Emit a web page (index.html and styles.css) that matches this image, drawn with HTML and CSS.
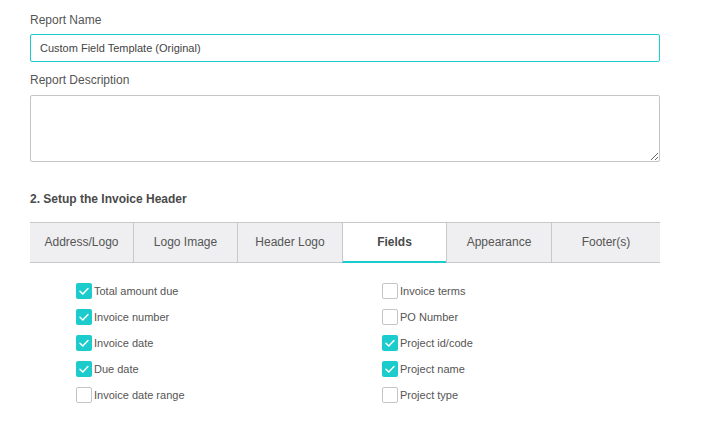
FILE: index.html
```html
<!DOCTYPE html>
<html lang="en">
<head>
<meta charset="utf-8">
<title>Report Setup</title>
<link rel="stylesheet" href="styles.css">
</head>
<body>
<div class="page">
  <label class="label label-first" for="rname">Report Name</label>
  <input id="rname" class="text-input" type="text" value="Custom Field Template (Original)">
  <label class="label label-second" for="rdesc">Report Description</label>
  <textarea id="rdesc" class="text-area"></textarea>

  <h2 class="section-title">2. Setup the Invoice Header</h2>

  <div class="tabs">
    <div class="tab">Address/Logo</div>
    <div class="tab">Logo Image</div>
    <div class="tab">Header Logo</div>
    <div class="tab tab-active">Fields</div>
    <div class="tab">Appearance</div>
    <div class="tab">Footer(s)</div>
  </div>

  <div class="fields">
    <div class="field"><span class="box checked"><svg viewBox="0 0 16 16" width="16" height="16"><path d="M4 8.3 L6.8 11 L12 5.6" fill="none" stroke="#fff" stroke-width="1.5" stroke-linecap="round" stroke-linejoin="round"/></svg></span><span class="field-label">Total amount due</span></div>
    <div class="field"><span class="box"></span><span class="field-label">Invoice terms</span></div>
    <div class="field"><span class="box checked"><svg viewBox="0 0 16 16" width="16" height="16"><path d="M4 8.3 L6.8 11 L12 5.6" fill="none" stroke="#fff" stroke-width="1.5" stroke-linecap="round" stroke-linejoin="round"/></svg></span><span class="field-label">Invoice number</span></div>
    <div class="field"><span class="box"></span><span class="field-label">PO Number</span></div>
    <div class="field"><span class="box checked"><svg viewBox="0 0 16 16" width="16" height="16"><path d="M4 8.3 L6.8 11 L12 5.6" fill="none" stroke="#fff" stroke-width="1.5" stroke-linecap="round" stroke-linejoin="round"/></svg></span><span class="field-label">Invoice date</span></div>
    <div class="field"><span class="box checked"><svg viewBox="0 0 16 16" width="16" height="16"><path d="M4 8.3 L6.8 11 L12 5.6" fill="none" stroke="#fff" stroke-width="1.5" stroke-linecap="round" stroke-linejoin="round"/></svg></span><span class="field-label">Project id/code</span></div>
    <div class="field"><span class="box checked"><svg viewBox="0 0 16 16" width="16" height="16"><path d="M4 8.3 L6.8 11 L12 5.6" fill="none" stroke="#fff" stroke-width="1.5" stroke-linecap="round" stroke-linejoin="round"/></svg></span><span class="field-label">Due date</span></div>
    <div class="field"><span class="box checked"><svg viewBox="0 0 16 16" width="16" height="16"><path d="M4 8.3 L6.8 11 L12 5.6" fill="none" stroke="#fff" stroke-width="1.5" stroke-linecap="round" stroke-linejoin="round"/></svg></span><span class="field-label">Project name</span></div>
    <div class="field"><span class="box"></span><span class="field-label">Invoice date range</span></div>
    <div class="field"><span class="box"></span><span class="field-label">Project type</span></div>
  </div>
</div>
</body>
</html>
```

FILE: styles.css
```css
* { box-sizing: border-box; }
html, body {
  margin: 0;
  padding: 0;
  background: #ffffff;
}
body {
  font-family: "Liberation Sans", Arial, sans-serif;
  color: #555555;
}
.page {
  width: 630px;
  margin-left: 30px;
  padding-top: 13px;
  display: flex;
  flex-direction: column;
}
.label {
  display: block;
  font-size: 12px;
  line-height: 14px;
  color: #555555;
}
.label-first { margin-bottom: 7px; }
.label-second { margin-top: 11px; margin-bottom: 8px; }
.text-input {
  width: 630px;
  height: 28px;
  border: 1px solid #1ccccc;
  border-radius: 2px;
  padding: 0 9px;
  font-family: "Liberation Sans", Arial, sans-serif;
  font-size: 11px;
  color: #444444;
  outline: none;
  margin: 0;
}
.text-area {
  width: 630px;
  height: 67px;
  border: 1px solid #c4c4c4;
  border-radius: 2px;
  margin: 0;
  padding: 4px 8px;
  font-family: "Liberation Sans", Arial, sans-serif;
  font-size: 11px;
  display: block;
}
.section-title {
  margin: 30px 0 16px 0;
  font-size: 12px;
  line-height: 14px;
  font-weight: bold;
  color: #4a4a4a;
}
.tabs {
  display: grid;
  grid-template-columns: 103px 104px 105px 104px 105px 1fr;
  border-top: 1px solid #c8c8c8;
}
.tab {
  height: 40px;
  line-height: 39px;
  text-align: center;
  font-size: 12px;
  color: #555555;
  background: #efeff1;
  border-bottom: 1px solid #c8c8c8;
  border-left: 1px solid #c8c8c8;
}
.tab:first-child { border-left: none; }
.tab-active {
  background: #ffffff;
  font-weight: bold;
  color: #4a4a4a;
  border-bottom: 2px solid #1ccccc;
  line-height: 38px;
}
.fields {
  display: grid;
  grid-template-columns: 306px 1fr;
  row-gap: 10px;
  padding: 20px 0 0 46px;
}
.field {
  display: flex;
  align-items: center;
  height: 16px;
}
.box {
  width: 16px;
  height: 16px;
  border: 1px solid #c4c4c4;
  border-radius: 2px;
  background: #ffffff;
  flex: none;
  display: flex;
}
.box.checked {
  border: none;
  background: #1ccccc;
}
.field-label {
  margin-left: 2px;
  font-size: 11px;
  color: #555555;
}
```
